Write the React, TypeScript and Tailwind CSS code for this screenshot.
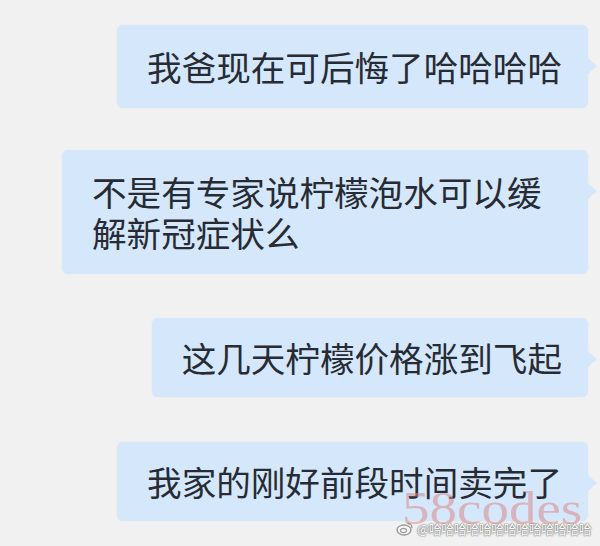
type Msg = {
  text: string
  wrap: string
}

/** chat bubbles, top to bottom */
const MESSAGES: Msg[] = [
  { text: '我爸现在可后悔了哈哈哈哈', wrap: 'mt-[25px] py-[21px]' },
  { text: '不是有专家说柠檬泡水可以缓解新冠症状么', wrap: 'mt-[42px] py-[21px]' },
  { text: '这几天柠檬价格涨到飞起', wrap: 'mt-[44px] py-[19px]' },
  { text: '我家的刚好前段时间卖完了', wrap: 'mt-[45px] py-[19px]' },
]

function Bubble({ msg }: { msg: Msg }) {
  return (
    <div className={`relative ml-auto max-w-[526px] rounded-[6px] bg-[#d5e7fb] pl-[30px] pr-[26px] shadow-[0_0_2px_rgba(0,0,0,0.06)] ${msg.wrap}`}>
      <p className="text-[34.6px] leading-[41px] text-[#272b33]">{msg.text}</p>
      {/* tail */}
      <div className="absolute right-[-9px] top-[33px] h-0 w-0 border-y-[8px] border-l-[9px] border-y-transparent border-l-[#d5e7fb]" />
    </div>
  )
}

export default function App() {
  return (
    <div
      className="relative h-[546px] w-[600px] overflow-hidden bg-[#f1f1f1]"
      style={{ fontFamily: '"Noto Sans CJK SC", "Noto Sans", sans-serif' }}
    >
      <div className="flex flex-col pr-[12px]">
        {MESSAGES.map((m, i) => (
          <Bubble key={`msg-${i}`} msg={m} />
        ))}
      </div>

      {/* watermark */}
      <div
        className="absolute left-[402px] top-[484px] origin-top-left scale-y-[0.86] text-[55px] leading-none text-[#d88a8a]/55"
        style={{ fontFamily: '"Liberation Serif", serif' }}
      >
        58codes
      </div>
      <div className="absolute left-[396px] top-[521px] flex items-center gap-[3px]">
        <svg width="18" height="15" viewBox="0 0 18 15" fill="none">
          <ellipse cx="8" cy="9" rx="7" ry="5" stroke="#9a9a9a" strokeWidth="1.4" fill="#f6f6f6" />
          <ellipse cx="7.5" cy="9.5" rx="3" ry="2.2" stroke="#9a9a9a" strokeWidth="1.2" />
          <path d="M12 2.5 a4 4 0 0 1 4 4" stroke="#9a9a9a" strokeWidth="1.3" strokeLinecap="round" />
        </svg>
        <span className="text-[13px] leading-none tracking-[-0.5px] text-white [text-shadow:0_0_2px_#666,0_0_1px_#555]">
          @哈哈哈哈哈哈哈哈哈哈哈哈哈
        </span>
      </div>
    </div>
  )
}
